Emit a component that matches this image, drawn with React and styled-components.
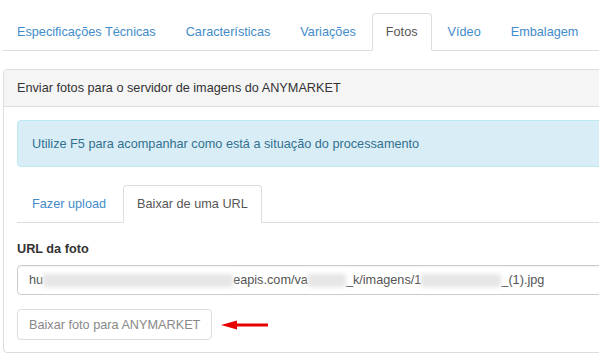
import React from "react";
import styled, { createGlobalStyle } from "styled-components";

const GlobalStyle = createGlobalStyle`
  html, body {
    margin: 0;
    padding: 0;
    background: #fff;
    overflow: hidden;
  }
  body {
    font-family: "Liberation Sans", Arial, sans-serif;
    font-size: 12.7px;
    color: #333;
  }
  * {
    box-sizing: border-box;
  }
`;

const Page = styled.div`
  width: 720px;
  padding: 13px 0 0 3px;
`;

const Tabs = styled.ul`
  display: flex;
  list-style: none;
  margin: 0;
  padding: 0;
  border-bottom: 1px solid #ddd;
`;

const Tab = styled.li`
  margin: 0 2px -1px 0;
  height: 38px;
  display: flex;
  align-items: center;
  padding: 0 ${(p) => p.$pad}px 1px;
  border: 1px solid ${(p) => (p.$active ? "#ddd" : "transparent")};
  border-bottom-color: ${(p) => (p.$active ? "#fff" : "transparent")};
  border-radius: 4px 4px 0 0;
  background: ${(p) => (p.$active ? "#fff" : "transparent")};
  color: ${(p) => (p.$active ? "#555" : "#428bca")};
  white-space: nowrap;
  cursor: pointer;
`;

const Panel = styled.section`
  margin-top: 18px;
  border: 1px solid #ddd;
  border-radius: 4px;
  background: #fff;
`;

const PanelHeading = styled.div`
  height: 37px;
  display: flex;
  align-items: center;
  padding: 0 13px 1px;
  background: #f5f5f5;
  border-bottom: 1px solid #ddd;
  border-radius: 3px 3px 0 0;
  color: #333;
`;

const PanelBody = styled.div`
  padding: 13px 13px 12px;
`;

const Alert = styled.div`
  height: 47px;
  display: flex;
  align-items: center;
  padding: 0 14px;
  background: #d9edf7;
  border: 1px solid #bce8f1;
  border-radius: 4px;
  color: #31708f;
  margin-bottom: 18px;
`;

const Label = styled.div`
  font-weight: bold;
  color: #333;
  margin: 18px 0 7px;
  line-height: 17px;
`;

const Input = styled.div`
  height: 30px;
  display: flex;
  align-items: center;
  padding: 0 11px;
  border: 1px solid #ccc;
  border-radius: 4px;
  color: #555;
  white-space: nowrap;
  box-shadow: inset 0 1px 1px rgba(0, 0, 0, 0.05);
`;

const Blur = styled.span`
  display: inline-block;
  width: ${(p) => p.$w}px;
  height: 13px;
  background: #e6e6e6;
  filter: blur(2px);
  vertical-align: middle;
`;

const Actions = styled.div`
  display: flex;
  align-items: center;
  gap: 9px;
  margin-top: 14px;
`;

const Button = styled.button`
  height: 31px;
  padding: 0 11px;
  font: inherit;
  color: #888;
  background: #fff;
  border: 1px solid #ddd;
  border-radius: 4px;
`;

const Arrow = () => (
  <svg width="48" height="10" viewBox="0 0 48 10">
    <path d="M15 5 H47" stroke="#e60000" strokeWidth="3" />
    <path d="M0 5 L16 0.5 L16 9.5 Z" fill="#e60000" />
  </svg>
);

export default function App() {
  return (
    <Page>
      <GlobalStyle />
      <Tabs>
        <Tab $pad={13}>Especificações Técnicas</Tab>
        <Tab $pad={13}>Características</Tab>
        <Tab $pad={13}>Variações</Tab>
        <Tab $pad={13} $active>Fotos</Tab>
        <Tab $pad={13}>Vídeo</Tab>
        <Tab $pad={13}>Embalagem</Tab>
      </Tabs>
      <Panel>
        <PanelHeading>Enviar fotos para o servidor de imagens do ANYMARKET</PanelHeading>
        <PanelBody>
          <Alert>Utilize F5 para acompanhar como está a situação do processamento</Alert>
          <Tabs>
            <Tab $pad={14}>Fazer upload</Tab>
            <Tab $pad={13} $active>Baixar de uma URL</Tab>
          </Tabs>
          <Label>URL da foto</Label>
          <Input>
            hu<Blur $w={190} />eapis.com/va<Blur $w={38} />_k/imagens/1<Blur $w={80} />_(1).jpg
          </Input>
          <Actions>
            <Button>Baixar foto para ANYMARKET</Button>
            <Arrow />
          </Actions>
        </PanelBody>
      </Panel>
    </Page>
  );
}
